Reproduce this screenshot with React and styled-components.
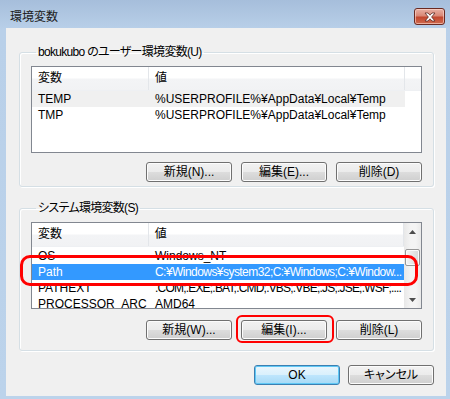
import React from 'react'
import styled, { createGlobalStyle } from 'styled-components'

const GlobalStyle = createGlobalStyle`
  html, body {
    margin: 0;
    padding: 0;
    background: #bcd3eb;
  }
  body {
    font-family: "Liberation Sans", "Noto Sans CJK JP", sans-serif;
    font-size: 12px;
    font-feature-settings: "palt" 1;
    color: #000;
  }
`

const userVars = [
  { id: 1, name: 'TEMP', value: '%USERPROFILE%¥AppData¥Local¥Temp', state: 'hover' },
  { id: 2, name: 'TMP', value: '%USERPROFILE%¥AppData¥Local¥Temp' },
]

const systemVars = [
  { id: 1, name: 'OS', value: 'Windows_NT' },
  { id: 2, name: 'Path', value: 'C:¥Windows¥system32;C:¥Windows;C:¥Window...', state: 'selected', tight: 0.55 },
  { id: 3, name: 'PATHEXT', value: '.COM;.EXE;.BAT;.CMD;.VBS;.VBE;.JS;.JSE;.WSF;....', tight: 0.8 },
  { id: 4, name: 'PROCESSOR_ARC', value: 'AMD64' },
]

const VarList = ({ rows, offset = 0, scroll }) => (
  <ListView>
    <ListMain>
      <Header>
        <HeaderCell $w={117}>変数</HeaderCell>
        <HeaderCell $w={256}>値</HeaderCell>
      </Header>
      <Rows $offset={offset}>
        {rows.map((row) => (
          <Row key={row.id} $state={row.state}>
            <Cell $w={117}>{row.name}</Cell>
            <Cell $w={256} $tight={row.tight}>{row.value}</Cell>
          </Row>
        ))}
      </Rows>
    </ListMain>
    {scroll && (
      <ScrollBar>
        <Arrow>
          <svg width="7" height="4" viewBox="0 0 7 4"><path d="M0 4 L3.5 0 L7 4 Z" fill="#4d4d4d" /></svg>
        </Arrow>
        <Thumb />
        <Track />
        <Arrow>
          <svg width="7" height="4" viewBox="0 0 7 4"><path d="M0 0 L3.5 4 L7 0 Z" fill="#4d4d4d" /></svg>
        </Arrow>
      </ScrollBar>
    )}
  </ListView>
)

const App = () => {
  return (
    <>
      <GlobalStyle />
      <Frame>
        <TitleBar>
          <Title>環境変数</Title>
          <CloseButton aria-label="close">
            <svg width="12" height="10" viewBox="0 0 12 10">
              <path
                d="M1 1 H4 L6 3.2 L8 1 H11 L7.6 5 L11 9 H8 L6 6.8 L4 9 H1 L4.4 5 Z"
                fill="#fff"
                stroke="#5a2a24"
                strokeWidth="0.8"
                strokeLinejoin="round"
              />
            </svg>
          </CloseButton>
        </TitleBar>
        <Client>
          <GroupBox $pb={4}>
            <Legend>bokukubo のユーザー環境変数(U)</Legend>
            <VarList rows={userVars} />
            <ButtonRow $mt={9}>
              <Button>新規(N)...</Button>
              <Button>編集(E)...</Button>
              <Button>削除(D)</Button>
            </ButtonRow>
          </GroupBox>
          <GroupBox $pb={10} $mt={14}>
            <Legend>システム環境変数(S)</Legend>
            <VarList rows={systemVars} offset={1} scroll />
            <ButtonRow $mt={11}>
              <Button>新規(W)...</Button>
              <Button>編集(I)...</Button>
              <Button>削除(L)</Button>
            </ButtonRow>
          </GroupBox>
          <Footer>
            <Button $default>OK</Button>
            <Button>キャンセル</Button>
          </Footer>
        </Client>
        <Mark $x={20} $y={255} $w={398} $h={31} $r={10} $t={3} />
        <Mark $x={236} $y={315} $w={98} $h={28} $r={6} $t={2} />
      </Frame>
    </>
  )
}

const Frame = styled.div`
  position: relative;
  width: 450px;
  height: 399px;
  box-sizing: border-box;
  padding: 0 4px 3px 6px;
  display: flex;
  flex-direction: column;
  background: linear-gradient(#a6bedb 0, #b9d0e9 30px, #bcd3eb 100%);
  overflow: hidden;
`

const TitleBar = styled.div`
  height: 28px;
  display: flex;
  align-items: flex-start;
  justify-content: space-between;
`

const Title = styled.div`
  padding: 9px 0 0 4px;
  font-family: "Noto Sans CJK JP", sans-serif;
  font-size: 12px;
  line-height: 14px;
  color: #1c1c1c;
`

const CloseButton = styled.button`
  margin: 8px 1px 0 0;
  width: 31px;
  height: 17px;
  padding: 0;
  display: grid;
  place-items: center;
  border: 1px solid #6a2a22;
  border-radius: 3px;
  background: linear-gradient(#e8b0a4 0, #d98876 45%, #c2472f 55%, #cf6a4e 100%);
  box-shadow: inset 0 0 0 1px rgba(255, 220, 210, 0.6);
`

const Client = styled.div`
  flex: 1;
  display: flex;
  flex-direction: column;
  background: #f0f0f0;
  padding: 17px 12px 0 13px;
`

const GroupBox = styled.fieldset`
  margin: ${(p) => p.$mt || 0}px 0 0 0;
  padding: 0 11px ${(p) => p.$pb}px;
  min-width: 0;
  border: 1px solid #d5dfe5;
  border-radius: 3px;
  box-shadow: inset 1px 1px 0 #fff, 1px 1px 0 #fff;
`

const Legend = styled.legend`
  margin-left: 5px;
  padding: 0 2px;
  line-height: 14px;
  font-size: 12px;
  letter-spacing: -0.7px;
  color: #000;
`

const ListView = styled.div`
  margin-top: 7px;
  height: 87px;
  box-sizing: border-box;
  border: 1px solid #828790;
  background: #fff;
  display: flex;
  overflow: hidden;
`

const ListMain = styled.div`
  flex: 1;
  display: flex;
  flex-direction: column;
  overflow: hidden;
`

const Header = styled.div`
  height: 24px;
  flex-shrink: 0;
  display: flex;
  box-sizing: border-box;
  border-bottom: 1px solid #eef0f3;
  background: linear-gradient(#ffffff 0, #ffffff 48%, #f3f4f6 52%, #f1f2f4 100%);
`

const HeaderCell = styled.div`
  width: ${(p) => p.$w}px;
  box-sizing: border-box;
  padding-left: 6px;
  line-height: 23px;
  border-right: 1px solid #e3e6ea;
`

const Rows = styled.div`
  padding-top: ${(p) => p.$offset}px;
`

const Row = styled.div`
  width: 373px;
  height: 16px;
  display: flex;
  background: ${(p) =>
    p.$state === 'selected' ? '#3399ff' : p.$state === 'hover' ? '#f0f0f0' : 'transparent'};
  color: ${(p) => (p.$state === 'selected' ? '#fff' : '#000')};
`

const Cell = styled.div`
  width: ${(p) => p.$w}px;
  box-sizing: border-box;
  padding-left: 6px;
  line-height: 16px;
  white-space: nowrap;
  overflow: hidden;
  letter-spacing: ${(p) => (p.$tight ? `-${p.$tight}px` : 'normal')};
`

const ScrollBar = styled.div`
  width: 17px;
  display: flex;
  flex-direction: column;
  background: linear-gradient(to right, #e8e8e8, #f4f4f4 40%, #f4f4f4 70%, #e9e9e9);
`

const Arrow = styled.div`
  height: 17px;
  display: grid;
  place-items: center;
`

const Thumb = styled.div`
  margin: 9px 1px 0;
  height: 15px;
  border: 1px solid #979797;
  border-radius: 2px;
  background: linear-gradient(to right, #f5f5f5, #e6e6e6 50%, #d8d8d8);
  box-shadow: inset 0 0 0 1px #fafafa;
`

const Track = styled.div`
  flex: 1;
`

const ButtonRow = styled.div`
  margin-top: ${(p) => p.$mt}px;
  display: flex;
  justify-content: flex-end;
  gap: 9px;
`

const Footer = styled.div`
  margin-top: 14px;
  display: flex;
  justify-content: flex-end;
  gap: 8px;
`

const Button = styled.button`
  width: 86px;
  height: 20px;
  padding: 0;
  font-family: "Liberation Sans", "Noto Sans CJK JP", sans-serif;
  font-size: 12px;
  font-feature-settings: "palt" 1;
  line-height: 18px;
  color: #000;
  border: 1px solid ${(p) => (p.$default ? '#3c7fb1' : '#707070')};
  border-radius: 3px;
  background: ${(p) =>
    p.$default
      ? 'linear-gradient(#eaf6fd 0, #d9f0fc 50%, #bee6fd 50%, #a7d9f5 100%)'
      : 'linear-gradient(#f2f2f2 0, #ebebeb 50%, #dddddd 50%, #cfcfcf 100%)'};
  box-shadow: ${(p) =>
    p.$default ? 'inset 0 0 0 1px #5fc8f5' : 'inset 0 0 0 1px #fcfcfc'};
`

const Mark = styled.div`
  position: absolute;
  left: ${(p) => p.$x}px;
  top: ${(p) => p.$y}px;
  width: ${(p) => p.$w}px;
  height: ${(p) => p.$h}px;
  box-sizing: border-box;
  border: ${(p) => p.$t}px solid #ff0000;
  border-radius: ${(p) => p.$r}px;
  pointer-events: none;
`

export default App
